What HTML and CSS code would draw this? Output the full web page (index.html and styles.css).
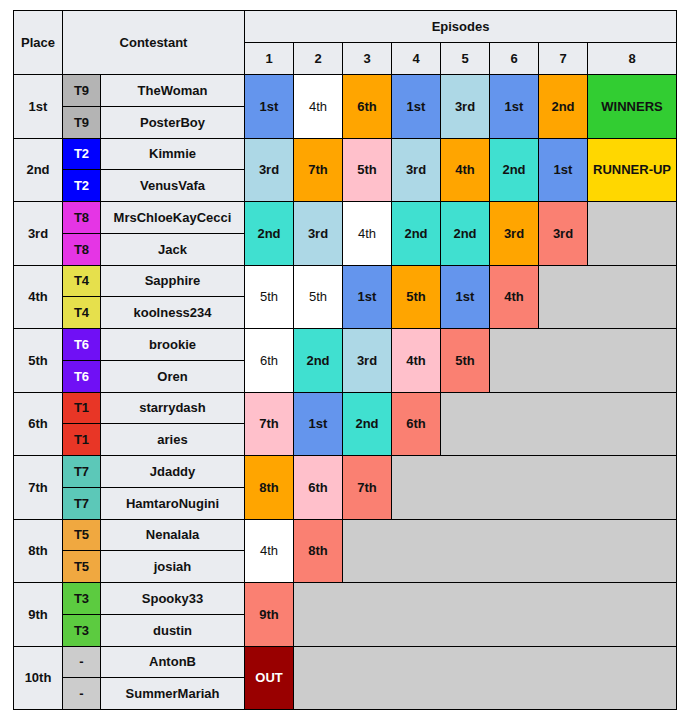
FILE: index.html
```html
<!DOCTYPE html>
<html>
<head>
<meta charset="utf-8">
<link rel="stylesheet" href="styles.css">
</head>
<body>
<table class="results">
<colgroup>
<col class="c-place"><col class="c-team"><col class="c-name">
<col class="c-ep"><col class="c-ep"><col class="c-ep"><col class="c-ep"><col class="c-ep"><col class="c-ep"><col class="c-ep"><col class="c-ep8">
</colgroup>
<thead>
<tr class="hr"><th rowspan="2">Place</th><th rowspan="2" colspan="2">Contestant</th><th colspan="8">Episodes</th></tr>
<tr class="hr"><th>1</th><th>2</th><th>3</th><th>4</th><th>5</th><th>6</th><th>7</th><th>8</th></tr>
</thead>
<tbody>
<tr><th rowspan="2">1st</th><td class="t t9">T9</td><th>TheWoman</th><td rowspan="2" class="r1">1st</td><td rowspan="2" class="rw">4th</td><td rowspan="2" class="ro">6th</td><td rowspan="2" class="r1">1st</td><td rowspan="2" class="rl">3rd</td><td rowspan="2" class="r1">1st</td><td rowspan="2" class="ro">2nd</td><td rowspan="2" class="rwin">WINNERS</td></tr>
<tr><td class="t t9">T9</td><th>PosterBoy</th></tr>

<tr><th rowspan="2">2nd</th><td class="t t2">T2</td><th>Kimmie</th><td rowspan="2" class="rl">3rd</td><td rowspan="2" class="ro">7th</td><td rowspan="2" class="rp">5th</td><td rowspan="2" class="rl">3rd</td><td rowspan="2" class="ro">4th</td><td rowspan="2" class="rt">2nd</td><td rowspan="2" class="r1">1st</td><td rowspan="2" class="rrun">RUNNER-UP</td></tr>
<tr><td class="t t2">T2</td><th>VenusVafa</th></tr>

<tr><th rowspan="2">3rd</th><td class="t t8">T8</td><th>MrsChloeKayCecci</th><td rowspan="2" class="rt">2nd</td><td rowspan="2" class="rl">3rd</td><td rowspan="2" class="rw">4th</td><td rowspan="2" class="rt">2nd</td><td rowspan="2" class="rt">2nd</td><td rowspan="2" class="ro">3rd</td><td rowspan="2" class="rs">3rd</td><td rowspan="2" class="rx"></td></tr>
<tr><td class="t t8">T8</td><th>Jack</th></tr>

<tr><th rowspan="2">4th</th><td class="t t4">T4</td><th>Sapphire</th><td rowspan="2" class="rw">5th</td><td rowspan="2" class="rw">5th</td><td rowspan="2" class="r1">1st</td><td rowspan="2" class="ro">5th</td><td rowspan="2" class="r1">1st</td><td rowspan="2" class="rs">4th</td><td rowspan="2" colspan="2" class="rx"></td></tr>
<tr><td class="t t4">T4</td><th>koolness234</th></tr>

<tr><th rowspan="2">5th</th><td class="t t6">T6</td><th>brookie</th><td rowspan="2" class="rw">6th</td><td rowspan="2" class="rt">2nd</td><td rowspan="2" class="rl">3rd</td><td rowspan="2" class="rp">4th</td><td rowspan="2" class="rs">5th</td><td rowspan="2" colspan="3" class="rx"></td></tr>
<tr><td class="t t6">T6</td><th>Oren</th></tr>

<tr><th rowspan="2">6th</th><td class="t t1">T1</td><th>starrydash</th><td rowspan="2" class="rp">7th</td><td rowspan="2" class="r1">1st</td><td rowspan="2" class="rt">2nd</td><td rowspan="2" class="rs">6th</td><td rowspan="2" colspan="4" class="rx"></td></tr>
<tr><td class="t t1">T1</td><th>aries</th></tr>

<tr><th rowspan="2">7th</th><td class="t t7">T7</td><th>Jdaddy</th><td rowspan="2" class="ro">8th</td><td rowspan="2" class="rp">6th</td><td rowspan="2" class="rs">7th</td><td rowspan="2" colspan="5" class="rx"></td></tr>
<tr><td class="t t7">T7</td><th>HamtaroNugini</th></tr>

<tr><th rowspan="2">8th</th><td class="t t5">T5</td><th>Nenalala</th><td rowspan="2" class="rw">4th</td><td rowspan="2" class="rs">8th</td><td rowspan="2" colspan="6" class="rx"></td></tr>
<tr><td class="t t5">T5</td><th>josiah</th></tr>

<tr><th rowspan="2">9th</th><td class="t t3">T3</td><th>Spooky33</th><td rowspan="2" class="rs">9th</td><td rowspan="2" colspan="7" class="rx"></td></tr>
<tr><td class="t t3">T3</td><th>dustin</th></tr>

<tr><th rowspan="2">10th</th><td class="t tn">-</td><th>AntonB</th><td rowspan="2" class="rout">OUT</td><td rowspan="2" colspan="7" class="rx"></td></tr>
<tr><td class="t tn">-</td><th>SummerMariah</th></tr>
</tbody>
</table>
</body>
</html>
```
FILE: styles.css
```css
html, body {
  margin: 0;
  padding: 0;
  background: #ffffff;
}
body {
  padding: 10px 0 0 13px;
  font-family: "Liberation Sans", Arial, sans-serif;
  font-size: 13px;
  color: #111111;
}
.results {
  border-collapse: collapse;
  table-layout: fixed;
  width: 663px;
  text-align: center;
}
.c-place { width: 49px; }
.c-team { width: 38px; }
.c-name { width: 144px; }
.c-ep { width: 49px; }
.c-ep8 { width: 89px; }
.results th, .results td {
  border: 1px solid #000000;
  padding: 0;
  font-weight: bold;
  text-align: center;
  vertical-align: middle;
}
.results th {
  background: #eaecf0;
}
.results tr.hr { height: 32px; }
.results tbody tr { height: 31.75px; }
.t9 { background: #b4b4b4; }
.t2 { background: #0000ff; color: #ffffff; }
.t8 { background: #e535e5; }
.t4 { background: #e6e04c; }
.t6 { background: #7010f5; color: #ffffff; }
.t1 { background: #e83626; }
.t7 { background: #5cc8b8; }
.t5 { background: #f0a840; }
.t3 { background: #5ccb40; }
.tn { background: #cccccc; }
.r1 { background: #6495ed; }
.rw { background: #ffffff; font-weight: normal !important; }
.ro { background: #ffa500; }
.rl { background: #add8e6; }
.rt { background: #40e0d0; }
.rp { background: #ffc0cb; }
.rs { background: #fa8072; }
.rwin { background: #32cd32; }
.rrun { background: #ffd700; }
.rout { background: #990000; color: #ffffff; }
.rx { background: #cccccc; }
```
